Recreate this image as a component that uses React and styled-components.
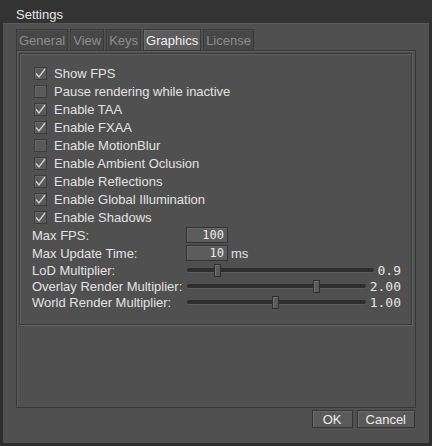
import styled, { createGlobalStyle } from "styled-components";

const GlobalStyle = createGlobalStyle`
  html, body {
    margin: 0;
    padding: 0;
    background: #2d2d2d;
  }
  body {
    font-family: "Liberation Sans", Arial, sans-serif;
  }
`;

const Window = styled.div`
  width: 432px;
  height: 446px;
  display: flex;
  flex-direction: column;
  background: #2e2e2e;
  box-sizing: border-box;
`;

const TitleBar = styled.div`
  height: 23px;
  flex: none;
  display: flex;
  align-items: center;
  padding-left: 16px;
  padding-top: 5px;
  box-sizing: border-box;
  background: #333333;
  color: #e6e6e6;
  font-size: 13px;
`;

const Body = styled.div`
  flex: 1;
  margin: 0 3px 3px 3px;
  background: #505050;
  border-top: 1px solid #5a5a5a;
  display: flex;
  flex-direction: column;
  padding: 5px 13px 0 13px;
  box-sizing: border-box;
`;

const TabRow = styled.div`
  display: flex;
  gap: 2px;
  height: 21px;
`;

const Tab = styled.div`
  padding: 1px 2px 0 2px;
  display: flex;
  align-items: center;
  font-size: 13px;
  box-sizing: border-box;
  border: 1px solid #3a3a3a;
  border-bottom: none;
  background: ${(p) => (p.$active ? "#5c5c5c" : "#474747")};
  color: ${(p) => (p.$active ? "#efefef" : "#8e8e8e")};
  box-shadow: inset 1px 1px 0 ${(p) => (p.$active ? "#6a6a6a" : "#4e4e4e")};
`;

const Panel = styled.div`
  width: 400px;
  height: 358px;
  box-sizing: border-box;
  border: 1px solid #383838;
  box-shadow: inset 1px 1px 0 #5e5e5e;
  padding: 2px 3px 0 2px;
`;

const Group = styled.div`
  height: 272px;
  box-sizing: border-box;
  border: 1px solid #3a3a3a;
  box-shadow: 1px 1px 0 #626262, inset 1px 1px 0 #606060;
  padding: 10px 10px 0 12px;
  display: flex;
  flex-direction: column;
`;

const CheckRow = styled.label`
  height: 18px;
  display: flex;
  align-items: center;
  gap: 7px;
  padding-left: 2px;
  color: #e2e2e2;
  font-size: 13px;
`;

const Box = styled.span`
  width: 13px;
  height: 13px;
  box-sizing: border-box;
  border: 1px solid #3c3c3c;
  background: #5a5a5a;
  box-shadow: inset 1px 1px 0 #676767;
  display: flex;
  align-items: center;
  justify-content: center;
`;

const Check = ({ on }) => (
  <Box>
    {on && (
      <svg width="11" height="11" viewBox="0 0 11 11">
        <path d="M1 5.5 L4 9 L10 1" fill="none" stroke="#d4d4d4" strokeWidth="1.3" />
      </svg>
    )}
  </Box>
);

const FieldRow = styled.div`
  height: ${(p) => p.$h}px;
  display: grid;
  grid-template-columns: 154px 1fr;
  align-items: center;
  color: #e2e2e2;
  font-size: 13px;
`;

const Control = styled.div`
  display: flex;
  align-items: center;
  gap: 3px;
`;

const NumBox = styled.div`
  width: 42px;
  height: 16px;
  box-sizing: border-box;
  border: 1px solid #333;
  background: #5c5c5c;
  box-shadow: inset 1px 1px 0 #686868;
  font-family: "DejaVu Sans Mono", monospace;
  font-size: 12px;
  color: #eaeaea;
  text-align: right;
  padding-right: 3px;
  line-height: 14px;
`;

const Unit = styled.span`
  font-size: 13px;
  color: #e2e2e2;
`;

const SliderWrap = styled.div`
  flex: 1;
  position: relative;
  height: 16px;
  display: flex;
  align-items: center;
  margin-left: 1px;
`;

const Track = styled.div`
  width: 100%;
  height: 4px;
  border-radius: 2px;
  background: #2e2e2e;
  box-shadow: 0 1px 0 #5e5e5e;
`;

const Handle = styled.div`
  position: absolute;
  top: 2px;
  width: 7px;
  height: 13px;
  box-sizing: border-box;
  border: 1px solid #2f2f2f;
  background: #5a5a5a;
  box-shadow: inset 1px 1px 0 #707070;
`;

const Value = styled.span`
  font-family: "DejaVu Sans Mono", monospace;
  font-size: 13px;
  color: #e6e6e6;
  margin-left: 1px;
`;

const ButtonRow = styled.div`
  display: flex;
  justify-content: flex-end;
  gap: 4px;
  padding-top: 2px;
  padding-right: 1px;
`;

const Button = styled.div`
  height: 18px;
  padding: 0 ${(p) => p.$pad}px;
  box-sizing: border-box;
  border: 1px solid #353535;
  background: #5a5a5a;
  box-shadow: inset 1px 1px 0 #6a6a6a;
  color: #ececec;
  font-size: 13px;
  display: flex;
  align-items: center;
`;

const checks = [
  ["Show FPS", true],
  ["Pause rendering while inactive", false],
  ["Enable TAA", true],
  ["Enable FXAA", true],
  ["Enable MotionBlur", false],
  ["Enable Ambient Oclusion", true],
  ["Enable Reflections", true],
  ["Enable Global Illumination", true],
  ["Enable Shadows", true],
];

const sliders = [
  ["LoD Multiplier:", "0.9", 0.16],
  ["Overlay Render Multiplier:", "2.00", 0.72],
  ["World Render Multiplier:", "1.00", 0.49],
];

function Slider({ pos }) {
  return (
    <SliderWrap>
      <Track />
      <Handle style={{ left: `calc(${pos * 100}% - 3px)` }} />
    </SliderWrap>
  );
}

export default function App() {
  return (
    <>
      <GlobalStyle />
      <Window>
        <TitleBar>Settings</TitleBar>
        <Body>
          <TabRow>
            <Tab>General</Tab>
            <Tab>View</Tab>
            <Tab>Keys</Tab>
            <Tab $active>Graphics</Tab>
            <Tab>License</Tab>
          </TabRow>
          <Panel>
            <Group>
              {checks.map(([label, on]) => (
                <CheckRow key={label}>
                  <Check on={on} />
                  {label}
                </CheckRow>
              ))}
              <FieldRow $h={18}>
                <span>Max FPS:</span>
                <Control>
                  <NumBox>100</NumBox>
                </Control>
              </FieldRow>
              <FieldRow $h={18}>
                <span>Max Update Time:</span>
                <Control>
                  <NumBox>10</NumBox>
                  <Unit>ms</Unit>
                </Control>
              </FieldRow>
              {sliders.map(([label, value, pos]) => (
                <FieldRow $h={16} key={label}>
                  <span>{label}</span>
                  <Control>
                    <Slider pos={pos} />
                    <Value>{value}</Value>
                  </Control>
                </FieldRow>
              ))}
            </Group>
          </Panel>
          <ButtonRow>
            <Button $pad={10}>OK</Button>
            <Button $pad={8}>Cancel</Button>
          </ButtonRow>
        </Body>
      </Window>
    </>
  );
}
